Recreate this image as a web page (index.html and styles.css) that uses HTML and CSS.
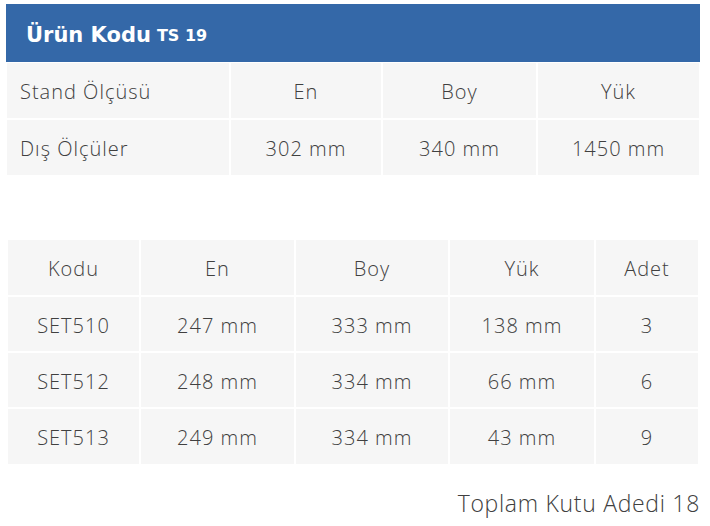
FILE: index.html
```html
<!DOCTYPE html>
<html lang="tr">
<head>
<meta charset="utf-8">
<link rel="stylesheet" href="styles.css">
</head>
<body>
<div class="page">
  <div class="title"><span class="title-main">Ürün Kodu</span> <span class="title-code">TS 19</span></div>
  <div class="grid grid-stand">
    <div class="cell left">Stand Ölçüsü</div>
    <div class="cell">En</div>
    <div class="cell">Boy</div>
    <div class="cell">Yük</div>
    <div class="cell left">Dış Ölçüler</div>
    <div class="cell">302 mm</div>
    <div class="cell">340 mm</div>
    <div class="cell">1450 mm</div>
  </div>
  <div class="grid grid-sets">
    <div class="cell">Kodu</div>
    <div class="cell">En</div>
    <div class="cell">Boy</div>
    <div class="cell">Yük</div>
    <div class="cell">Adet</div>
    <div class="cell">SET510</div>
    <div class="cell">247 mm</div>
    <div class="cell">333 mm</div>
    <div class="cell">138 mm</div>
    <div class="cell">3</div>
    <div class="cell">SET512</div>
    <div class="cell">248 mm</div>
    <div class="cell">334 mm</div>
    <div class="cell">66 mm</div>
    <div class="cell">6</div>
    <div class="cell">SET513</div>
    <div class="cell">249 mm</div>
    <div class="cell">334 mm</div>
    <div class="cell">43 mm</div>
    <div class="cell">9</div>
  </div>
  <div class="total">Toplam Kutu Adedi 18</div>
</div>
</body>
</html>
```

FILE: styles.css
```css
* { box-sizing: border-box; }
html, body { margin: 0; padding: 0; background: #ffffff; }
body {
  font-family: "Open Sans", "DejaVu Sans", sans-serif;
  font-weight: 300;
  color: #404040;
}
.page {
  width: 710px;
  padding: 4px 10px 0 6px;
}
.title {
  height: 58px;
  background: #3468a8;
  color: #ffffff;
  font-family: "DejaVu Sans", sans-serif;
  display: flex;
  align-items: center;
  gap: 6px;
  padding-left: 20px;
  padding-top: 3px;
}
.title-main {
  font-weight: 700;
  font-size: 21px;
}
.title-code {
  font-weight: 700;
  font-size: 16px;
  padding-top: 2px;
}
.grid {
  display: grid;
  gap: 2px;
}
.grid-stand {
  margin-left: 1px;
  margin-top: 1px;
  grid-template-columns: 222px 150px 153px 161px;
  grid-auto-rows: 55px;
}
.grid-sets {
  margin-top: 65px;
  margin-left: 2px;
  grid-template-columns: 131px 153px 152px 144px 102px;
  grid-template-rows: 55px 54px 54px 55px;
}
.cell {
  background: #f6f6f6;
  display: flex;
  align-items: center;
  justify-content: center;
  font-size: 20px;
  letter-spacing: 1px;
  padding-top: 2px;
}
.cell.left {
  justify-content: flex-start;
  padding-left: 13px;
}
.total {
  margin-top: 23px;
  text-align: right;
  font-size: 23px;
  letter-spacing: 0.7px;
}
```
